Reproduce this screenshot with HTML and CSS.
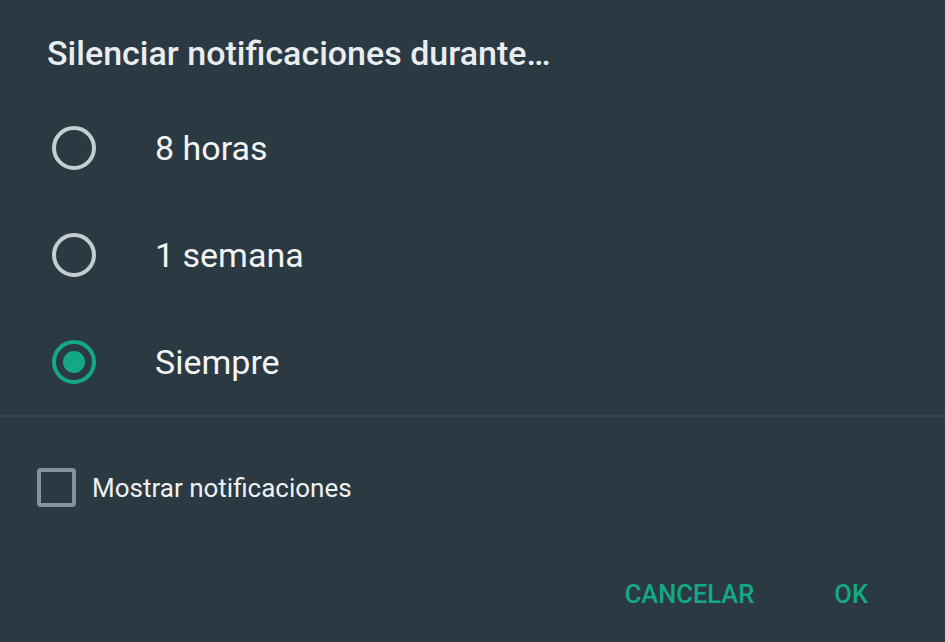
FILE: index.html
```html
<!DOCTYPE html>
<html lang="es">
<head>
<meta charset="utf-8">
<title>Silenciar notificaciones</title>
<link rel="stylesheet" href="styles.css">
</head>
<body>
<div class="dialog">
  <h1 class="title">Silenciar notificaciones durante…</h1>
  <ul class="options">
    <li class="option"><span class="radio"></span><span class="label">8 horas</span></li>
    <li class="option"><span class="radio"></span><span class="label">1 semana</span></li>
    <li class="option"><span class="radio checked"></span><span class="label">Siempre</span></li>
  </ul>
  <div class="divider"></div>
  <div class="check-row"><span class="checkbox"></span><span class="check-label">Mostrar notificaciones</span></div>
  <div class="actions">
    <button class="btn">CANCELAR</button>
    <button class="btn ok">OK</button>
  </div>
</div>
</body>
</html>
```

FILE: styles.css
```css
html, body {
  margin: 0;
  padding: 0;
  background: #2b3943;
  width: 945px;
  height: 642px;
  overflow: hidden;
}
.dialog {
  font-family: Roboto, "Liberation Sans", sans-serif;
  color: #eef1f2;
  display: flex;
  flex-direction: column;
  height: 642px;
}
.title {
  margin: 0;
  padding: 33px 0 0 47px;
  font-size: 34px;
  font-weight: 500;
  line-height: 40px;
  color: #e9edef;
  letter-spacing: 0;
}
.options {
  list-style: none;
  margin: 0;
  padding: 21px 0 0 0;
}
.option {
  display: flex;
  align-items: center;
  height: 107px;
}
.radio {
  box-sizing: border-box;
  width: 44px;
  height: 44px;
  margin-left: 52px;
  border: 4px solid #c5cdd1;
  border-radius: 50%;
  display: flex;
  align-items: center;
  justify-content: center;
  flex: none;
}
.radio.checked {
  border-color: #14a886;
}
.radio.checked::after {
  content: "";
  width: 22px;
  height: 22px;
  border-radius: 50%;
  background: #14a886;
}
.label {
  margin-left: 59px;
  font-size: 34px;
  color: #f2f4f5;
}
.divider {
  height: 2px;
  background: #38464f;
}
.check-row {
  display: flex;
  align-items: center;
  margin-top: 51px;
  padding-left: 37px;
}
.checkbox {
  box-sizing: border-box;
  width: 39px;
  height: 39px;
  border: 4px solid #86939b;
  border-radius: 4px;
  flex: none;
}
.check-label {
  margin-left: 16px;
  font-size: 26px;
  color: #eef1f2;
}
.actions {
  display: flex;
  justify-content: flex-end;
  margin-top: 72px;
  padding-right: 77px;
  gap: 80px;
}
.btn {
  background: none;
  border: none;
  padding: 0;
  font-family: Roboto, "Liberation Sans", sans-serif;
  font-size: 25.5px;
  font-weight: 500;
  color: #14a886;
  line-height: 30px;
}
```
